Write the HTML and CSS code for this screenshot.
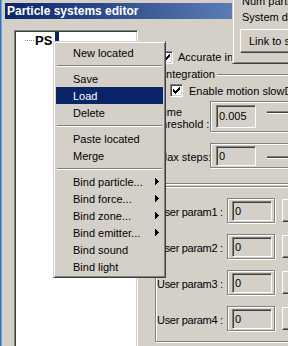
FILE: index.html
```html
<!DOCTYPE html>
<html lang="en">
<head>
    <meta charset="UTF-8">
    <title>Particle systems editor</title>
    <link rel="stylesheet" href="styles.css">
</head>
<body>
    <div class="desktop">
        <div class="desktop-edge"></div>
        <div class="window">
            <div class="titlebar">Particle systems editor</div>
            <div class="client">
                <div class="tree">
                    <div class="node">
                        <span class="branch"></span>
                        <span class="node-label">PS</span>
                        <span class="node-sel"></span>
                    </div>
                </div>

                <div class="props">
                    <div class="check-row accurate">
                        <span class="checkbox"><svg width="9" height="9" viewBox="0 0 9 9"><path d="M1 3h1v3h-1zM2 4h1v3h-1zM3 5h1v3h-1zM4 4h1v3h-1zM5 3h1v3h-1zM6 2h1v3h-1zM7 1h1v3h-1z" fill="#000"/></svg></span>
                        <span>Accurate integration</span>
                    </div>

                    <div class="group">
                        <span class="legend">Integration</span>
                        <div class="check-row slowdown">
                            <span class="checkbox"><svg width="9" height="9" viewBox="0 0 9 9"><path d="M1 3h1v3h-1zM2 4h1v3h-1zM3 5h1v3h-1zM4 4h1v3h-1zM5 3h1v3h-1zM6 2h1v3h-1zM7 1h1v3h-1z" fill="#000"/></svg></span>
                            <span>Enable motion slowDown</span>
                        </div>
                        <div class="field threshold">
                            <span class="field-label">Time<br>threshold :</span>
                            <div class="frame frame-wide">
                                <span class="edit">0.005</span>
                                <span class="track"></span>
                            </div>
                        </div>
                        <div class="field steps">
                            <span class="field-label">Max steps:</span>
                            <div class="frame frame-wide">
                                <span class="edit">0</span>
                                <span class="track"></span>
                            </div>
                        </div>
                    </div>

                    <div class="group params">
                        <div class="param">
                            <span class="param-label">User param1 :</span>
                            <div class="frame frame-small"><span class="edit">0</span></div>
                            <span class="side-btn"></span>
                        </div>
                        <div class="param">
                            <span class="param-label">User param2 :</span>
                            <div class="frame frame-small"><span class="edit">0</span></div>
                            <span class="side-btn"></span>
                        </div>
                        <div class="param">
                            <span class="param-label">User param3 :</span>
                            <div class="frame frame-small"><span class="edit">0</span></div>
                            <span class="side-btn"></span>
                        </div>
                        <div class="param">
                            <span class="param-label">User param4 :</span>
                            <div class="frame frame-small"><span class="edit">0</span></div>
                            <span class="side-btn"></span>
                        </div>
                    </div>
                </div>
            </div>
        </div>
    </div>

    <!-- window behind the menu, on the right -->
    <div class="side">
        <div class="side-line first">Num particles :</div>
        <div class="side-line">System data :</div>
        <div class="link-btn">Link to system</div>
    </div>

    <!-- context menu of the tree -->
    <div class="menu">
        <div class="menu-item">New located</div>
        <div class="menu-sep"></div>
        <div class="menu-item">Save</div>
        <div class="menu-item active">Load</div>
        <div class="menu-item">Delete</div>
        <div class="menu-sep"></div>
        <div class="menu-item">Paste located</div>
        <div class="menu-item">Merge</div>
        <div class="menu-sep"></div>
        <div class="menu-item">Bind particle...<svg class="menu-arrow" width="4" height="7" viewBox="0 0 4 7"><path d="M0 0h1v7h-1zM1 1h1v5h-1zM2 2h1v3h-1zM3 3h1v1h-1z" fill="#000"/></svg></div>
        <div class="menu-item">Bind force...<svg class="menu-arrow" width="4" height="7" viewBox="0 0 4 7"><path d="M0 0h1v7h-1zM1 1h1v5h-1zM2 2h1v3h-1zM3 3h1v1h-1z" fill="#000"/></svg></div>
        <div class="menu-item">Bind zone...<svg class="menu-arrow" width="4" height="7" viewBox="0 0 4 7"><path d="M0 0h1v7h-1zM1 1h1v5h-1zM2 2h1v3h-1zM3 3h1v1h-1z" fill="#000"/></svg></div>
        <div class="menu-item">Bind emitter...<svg class="menu-arrow" width="4" height="7" viewBox="0 0 4 7"><path d="M0 0h1v7h-1zM1 1h1v5h-1zM2 2h1v3h-1zM3 3h1v1h-1z" fill="#000"/></svg></div>
        <div class="menu-item">Bind sound</div>
        <div class="menu-item">Bind light</div>
    </div>
</body>
</html>
```

FILE: styles.css
```css
body {
    margin: 0;
    width: 288px;
    height: 346px;
    overflow: hidden;
    position: relative;
    background: #d4d0c8;
    font-family: 'Liberation Sans', Arial, sans-serif;
    font-size: 11px;
    color: #000;
}

.desktop {
    display: flex;
    height: 100%;
}

.desktop-edge {
    width: 2px;
    flex-shrink: 0;
    background: #3a6ea5;
    box-shadow: inset -1px 0 #7aa2d6;
}

.window {
    flex: 1;
    min-width: 0;
    padding: 3px 0 0 3px;
}

.titlebar {
    height: 16px;
    line-height: 16px;
    padding-left: 2px;
    background: linear-gradient(to right, #0a246a 0%, #5c7cb4 80%, #6a8abe 100%);
    color: #fff;
    font-weight: bold;
    font-size: 12px;
    white-space: nowrap;
}

.client {
    display: flex;
    margin-top: 11px;
}

/* tree view */
.tree {
    width: 124px;
    height: 330px;
    flex-shrink: 0;
    margin-left: 9px;
    box-sizing: border-box;
    padding: 2px 0 0 10px;
    background: #fff;
    border: 1px solid;
    border-color: #808080 #fff #fff #808080;
    box-shadow: inset 1px 1px #404040, inset -1px -1px #d4d0c8;
}

.node {
    display: flex;
    align-items: center;
    height: 15px;
}

.branch {
    width: 9px;
    height: 0;
    border-top: 1px dotted #808080;
}

.node-label {
    margin-left: 1px;
    font-size: 13px;
    font-weight: bold;
    line-height: 15px;
}

.node-sel {
    align-self: flex-start;
    width: 4px;
    height: 10px;
    margin: -1px 0 0 3px;
    background: #0a246a;
}

/* property panel */
.props {
    flex: 1;
    min-width: 0;
    padding: 20px 0 0 17px;
}

.check-row {
    display: flex;
    align-items: center;
    gap: 5px;
    height: 14px;
    white-space: nowrap;
}

.accurate {
    margin-left: 5px;
}

.checkbox {
    width: 13px;
    height: 13px;
    flex-shrink: 0;
    box-sizing: border-box;
    padding: 1px;
    background: #fff;
    border: 1px solid;
    border-color: #808080 #fff #fff #808080;
    box-shadow: inset 1px 1px #404040, inset -1px -1px #d4d0c8;
}

.checkbox svg {
    display: block;
}

.group {
    width: 170px;
    margin-top: 10px;
    padding-bottom: 15px;
    display: flex;
    flex-direction: column;
    align-items: flex-start;
    border: 1px solid #808080;
    box-shadow: inset 1px 1px #fff, 1px 1px #fff;
}

.legend {
    height: 13px;
    line-height: 13px;
    margin: -7px 0 0 7px;
    padding-right: 2px;
    background: #d4d0c8;
}

.slowdown {
    height: 13px;
    margin: 3px 0 0 14px;
    gap: 6px;
}

.field {
    display: flex;
    margin-left: 2px;
}

.field-label {
    width: 52px;
    flex-shrink: 0;
    white-space: nowrap;
}

.threshold {
    margin-top: 4px;
}

.threshold .field-label {
    margin-top: 5px;
    line-height: 12px;
}

.steps {
    margin-top: 11px;
}

.steps .field-label {
    align-self: center;
    margin-top: 3px;
    line-height: 13px;
}

.frame {
    display: flex;
    align-items: flex-start;
    box-sizing: border-box;
    border: 1px solid #808080;
    box-shadow: inset 1px 1px #fff, 1px 1px #fff;
}

.frame-wide {
    width: 120px;
    height: 31px;
    padding: 3px 0 0 5px;
}

.steps .frame-wide {
    height: 25px;
    padding-top: 2px;
}

.edit {
    width: 40px;
    height: 23px;
    flex-shrink: 0;
    box-sizing: border-box;
    padding: 3px 0 0 2px;
    line-height: 14px;
    background: #d4d0c8;
    border: 1px solid;
    border-color: #808080 #fff #fff #808080;
    box-shadow: inset 1px 1px #404040, inset -1px -1px #d4d0c8;
}

.steps .edit {
    height: 20px;
    padding-top: 2px;
}

.track {
    width: 40px;
    height: 1px;
    margin: 6px 0 0 11px;
    background: #404040;
    border-top: 1px solid #808080;
    border-bottom: 1px solid #fff;
}

.steps .track {
    margin-top: 10px;
}

.params {
    margin-top: 2px;
    padding-bottom: 10px;
}

.param {
    display: flex;
    height: 25px;
    margin: 11px 0 0 1px;
}

.param-label {
    width: 70px;
    flex-shrink: 0;
    align-self: center;
    padding-top: 3px;
    letter-spacing: -0.3px;
    white-space: nowrap;
}

.frame-small {
    width: 48px;
    height: 25px;
    padding: 2px 0 0 4px;
}

.frame-small .edit {
    height: 20px;
    padding-top: 2px;
}

.side-btn {
    width: 20px;
    height: 23px;
    margin: 1px 0 0 7px;
    box-sizing: border-box;
    border: 1px solid;
    border-color: #fff #404040 #404040 #fff;
    box-shadow: inset -1px -1px #808080;
}

/* overlapping window */
.side {
    position: absolute;
    left: 232px;
    top: 0;
    width: 70px;
    height: 64px;
    box-sizing: border-box;
    padding-left: 9px;
    overflow: hidden;
    background: #d4d0c8;
    border-left: 1px solid #d4d0c8;
    border-bottom: 1px solid #404040;
    box-shadow: inset 1px 0 #fff, inset 0 -1px #808080;
}

.side-line {
    line-height: 13px;
    margin-top: 3px;
    white-space: nowrap;
}

.side-line.first {
    margin-top: -5px;
}

.link-btn {
    width: 90px;
    height: 24px;
    margin: 5px 0 0 -2px;
    box-sizing: border-box;
    padding-left: 8px;
    display: flex;
    align-items: center;
    white-space: nowrap;
    border: 1px solid;
    border-color: #fff #404040 #404040 #fff;
    box-shadow: inset -1px -1px #808080;
}

/* popup menu */
.menu {
    position: absolute;
    left: 53px;
    top: 41px;
    width: 113px;
    box-sizing: border-box;
    padding: 2px;
    background: #d4d0c8;
    border: 1px solid;
    border-color: #d4d0c8 #404040 #404040 #d4d0c8;
    box-shadow: inset 1px 1px #fff, inset -1px -1px #808080;
}

.menu-item {
    display: flex;
    align-items: center;
    height: 17px;
    padding: 0 4px 0 17px;
    white-space: nowrap;
}

.menu-item.active {
    background: #0a246a;
    color: #fff;
}

.menu-arrow {
    margin-left: auto;
}

.menu-sep {
    height: 0;
    margin: 4px 1px 3px;
    border-top: 1px solid #808080;
    border-bottom: 1px solid #fff;
}
```
